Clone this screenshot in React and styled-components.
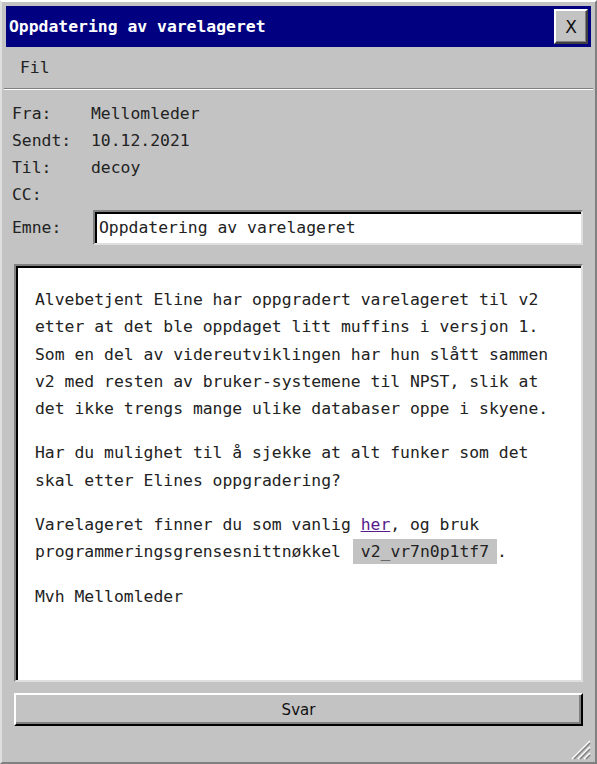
import React from 'react'
import styled, { createGlobalStyle } from 'styled-components'

const GlobalStyle = createGlobalStyle`
  html, body {
    margin: 0;
    padding: 0;
    background: #c3c3c3;
  }
  * { box-sizing: border-box; }
`

const mono = `'DejaVu Sans Mono', 'Liberation Mono', monospace`

const headers = [
  { label: 'Fra:', value: 'Mellomleder' },
  { label: 'Sendt:', value: '10.12.2021' },
  { label: 'Til:', value: 'decoy' },
  { label: 'CC:', value: '' },
]

const App = () => {
  return (
    <>
      <GlobalStyle />
      <Window>
        <TitleBar>
          <Title>Oppdatering av varelageret</Title>
          <CloseButton>X</CloseButton>
        </TitleBar>
        <MenuBar>
          <MenuItem>Fil</MenuItem>
        </MenuBar>
        <Separator />
        <Content>
          <Headers>
            {headers.map((h) => (
              <HeaderRow key={h.label}>
                <Label>{h.label}</Label>
                <Value>{h.value}</Value>
              </HeaderRow>
            ))}
            <SubjectRow>
              <Label>Emne:</Label>
              <SubjectField>Oppdatering av varelageret</SubjectField>
            </SubjectRow>
          </Headers>
          <MessageBox>
            <Para>
              Alvebetjent Eline har oppgradert varelageret til v2 etter at det ble
              oppdaget litt muffins i versjon 1. Som en del av videreutviklingen har
              hun slått sammen v2 med resten av bruker-systemene til NPST, slik at
              det ikke trengs mange ulike databaser oppe i skyene.
            </Para>
            <Para>
              Har du mulighet til å sjekke at alt funker som det skal etter Elines
              oppgradering?
            </Para>
            <Para>
              Varelageret finner du som vanlig <Link href="#">her</Link>, og bruk
              programmeringsgrensesnittnøkkel <Code>v2_vr7n0p1tf7</Code>.
            </Para>
            <Para>Mvh Mellomleder</Para>
          </MessageBox>
          <ReplyButton>Svar</ReplyButton>
        </Content>
        <Footer>
          <Grip width="22" height="22" viewBox="0 0 22 22">
            <path d="M21 3 L3 21" stroke="#fff" strokeWidth="1.5" />
            <path d="M21 5 L5 21" stroke="#808080" strokeWidth="1.5" />
            <path d="M21 9 L9 21" stroke="#fff" strokeWidth="1.5" />
            <path d="M21 11 L11 21" stroke="#808080" strokeWidth="1.5" />
            <path d="M21 15 L15 21" stroke="#fff" strokeWidth="1.5" />
            <path d="M21 17 L17 21" stroke="#808080" strokeWidth="1.5" />
          </Grip>
        </Footer>
      </Window>
    </>
  )
}

export default App

const Window = styled.div`
  width: 597px;
  height: 764px;
  background: #c3c3c3;
  border-top: 2px solid #fff;
  border-left: 2px solid #dfdfdf;
  border-right: 2px solid #808080;
  border-bottom: 2px solid #808080;
  padding: 4px 4px 0 4px;
  display: flex;
  flex-direction: column;
  font-family: ${mono};
  color: #222;
`

const TitleBar = styled.div`
  height: 41px;
  background: #000080;
  display: flex;
  align-items: center;
  justify-content: space-between;
  padding: 0 3px 0 3px;
`

const Title = styled.div`
  color: #fff;
  font-weight: bold;
  font-size: 16.4px;
`

const CloseButton = styled.div`
  width: 34px;
  height: 35px;
  background: #c3c3c3;
  border-top: 2px solid #fff;
  border-left: 2px solid #fff;
  border-right: 2px solid #404040;
  border-bottom: 2px solid #404040;
  box-shadow: inset -1px -1px 0 #808080;
  display: flex;
  align-items: center;
  justify-content: center;
  font-family: 'DejaVu Sans', Verdana, sans-serif;
  font-size: 17px;
  color: #111;
`

const MenuBar = styled.div`
  height: 41px;
  display: flex;
  align-items: center;
  padding-left: 14px;
`

const MenuItem = styled.div`
  font-size: 16.4px;
`

const Separator = styled.div`
  height: 2px;
  border-top: 1px solid #808080;
  border-bottom: 1px solid #fff;
  margin: 0 -2px;
`

const Content = styled.div`
  padding: 10px 8px 0 8px;
  display: flex;
  flex-direction: column;
`

const Headers = styled.div`
  display: flex;
  flex-direction: column;
  margin-left: -2px;
`

const HeaderRow = styled.div`
  display: flex;
  align-items: center;
  height: 27px;
  font-size: 16.4px;
`

const Label = styled.div`
  width: 79px;
  flex-shrink: 0;
`

const Value = styled.div``

const SubjectRow = styled.div`
  display: flex;
  align-items: center;
  margin-top: 2px;
  font-size: 16.4px;
`

const SubjectField = styled.div`
  flex: 1;
  margin-left: 2px;
  height: 35px;
  background: #fff;
  border-top: 2px solid #808080;
  border-left: 2px solid #808080;
  border-right: 2px solid #dfdfdf;
  border-bottom: 2px solid #dfdfdf;
  box-shadow: inset 2px 2px 0 #000;
  padding: 0 4px;
  display: flex;
  align-items: center;
  font-size: 16.4px;
  color: #222;
`

const MessageBox = styled.div`
  margin-top: 19px;
  height: 418px;
  background: #fff;
  border-top: 2px solid #808080;
  border-left: 2px solid #808080;
  border-right: 2px solid #dfdfdf;
  border-bottom: 2px solid #dfdfdf;
  box-shadow: inset 2px 2px 0 #000;
  padding: 20px 18px 0 19px;
  font-size: 16.4px;
  line-height: 27.3px;
  color: #222;
`

const Para = styled.p`
  margin: 0 0 17px 0;
`

const Link = styled.a`
  color: #551a8b;
  text-decoration: underline;
`

const Code = styled.span`
  background: #c3c3c3;
  padding: 3px 8px;
  margin-left: 2px;
`

const ReplyButton = styled.div`
  margin-top: 11px;
  height: 33px;
  background: #c3c3c3;
  border-top: 2px solid #fff;
  border-left: 2px solid #fff;
  border-right: 2px solid #000;
  border-bottom: 2px solid #000;
  box-shadow: inset -2px -2px 0 #808080;
  display: flex;
  align-items: center;
  justify-content: center;
  font-family: 'DejaVu Sans', Verdana, sans-serif;
  font-size: 15px;
  color: #111;
`

const Footer = styled.div`
  flex: 1;
  display: flex;
  justify-content: flex-end;
  align-items: flex-end;
`

const Grip = styled.svg`
  display: block;
  margin: 0 0 2px 0;
`
